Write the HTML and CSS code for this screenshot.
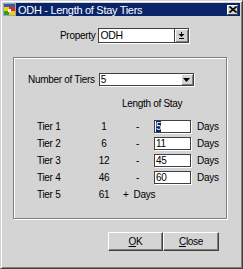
FILE: index.html
```html
<!DOCTYPE html>
<html lang="en">
<head>
    <meta charset="UTF-8">
    <title>ODH - Length of Stay Tiers</title>
    <link rel="stylesheet" href="styles.css">
</head>
<body>
    <div class="window">
        <div class="titlebar">
            <svg class="app-icon" width="13" height="13" viewBox="0 0 13 13">
                <rect x="0" y="0" width="13" height="13" fill="#9aa6b8"/>
                <rect x="1" y="1" width="11" height="3" fill="#3a5aa8"/>
                <rect x="1" y="4" width="5" height="4" fill="#f4d000"/>
                <rect x="6" y="4" width="6" height="4" fill="#d8282c"/>
                <rect x="1" y="8" width="5" height="4" fill="#2c9a3c"/>
                <rect x="6" y="8" width="6" height="4" fill="#f4d000"/>
                <rect x="5" y="6" width="3" height="3" fill="#ffffff"/>
            </svg>
            <span class="title">ODH - Length of Stay Tiers</span>
            <span class="close-btn">
                <svg width="8" height="7" viewBox="0 0 8 7">
                    <path d="M0.5 0.5 L7.5 6.5 M7.5 0.5 L0.5 6.5" stroke="#000" stroke-width="1.6"/>
                </svg>
            </span>
        </div>

        <div class="content">
            <div class="property-row">
                <label class="lbl">Property</label>
                <div class="field">
                    <span class="field-text">ODH</span>
                    <span class="field-btn">
                        <svg width="7" height="7" viewBox="0 0 7 7">
                            <rect x="3" y="0" width="1" height="2" fill="#000"/>
                            <polygon points="0.5,2 6.5,2 3.5,5" fill="#000"/>
                            <rect x="1" y="6" width="5" height="1" fill="#000"/>
                        </svg>
                    </span>
                </div>
            </div>

            <div class="group">
                <div class="tiers-row">
                    <label class="lbl">Number of Tiers</label>
                    <div class="combo">
                        <span class="combo-text">5</span>
                        <span class="combo-btn">
                            <svg width="7" height="4" viewBox="0 0 7 4">
                                <polygon points="0,0 7,0 3.5,4" fill="#000"/>
                            </svg>
                        </span>
                    </div>
                </div>

                <div class="los-head">Length of Stay</div>

                <div class="tier-grid">
                    <span>Tier 1</span><span class="num">1</span><span class="dash">-</span>
                    <span class="box"><span class="sel">5</span></span><span class="days">Days</span>

                    <span>Tier 2</span><span class="num">6</span><span class="dash">-</span>
                    <span class="box">11</span><span class="days">Days</span>

                    <span>Tier 3</span><span class="num">12</span><span class="dash">-</span>
                    <span class="box">45</span><span class="days">Days</span>

                    <span>Tier 4</span><span class="num">46</span><span class="dash">-</span>
                    <span class="box">60</span><span class="days">Days</span>

                    <span>Tier 5</span><span class="num">61</span><span class="plus">+&nbsp; Days</span>
                </div>
            </div>

            <div class="buttons">
                <button class="btn"><u>O</u>K</button>
                <button class="btn btn-wide"><u>C</u>lose</button>
            </div>
        </div>
    </div>
</body>
</html>
```

FILE: styles.css
```css
body {
    margin: 0;
    font-family: 'Liberation Sans', Arial, sans-serif;
    font-size: 10px;
    letter-spacing: -0.3px;
    color: #000;
    background: #d4d4d4;
}
.window {
    width: 243px;
    height: 269px;
    box-sizing: border-box;
    border: 1px solid;
    border-color: #d4d4d4 #404040 #404040 #d4d4d4;
    box-shadow: inset 1px 1px 0 #fff, inset -1px -1px 0 #808080;
    padding: 2px;
    background: #d4d4d4;
}
.titlebar {
    height: 13px;
    background: #0a246a;
    display: flex;
    align-items: center;
    color: #fff;
}
.app-icon {
    flex: none;
}
.title {
    margin-left: 2px;
    font-size: 11px;
    letter-spacing: -0.3px;
    flex: 1;
}
.close-btn {
    width: 11px;
    height: 10px;
    box-sizing: border-box;
    margin-right: 2px;
    background: #d4d4d4;
    border: 1px solid;
    border-color: #fff #404040 #404040 #fff;
    display: flex;
    align-items: center;
    justify-content: center;
}
.content {
    display: flex;
    flex-direction: column;
}
.lbl {
    white-space: nowrap;
}
.property-row {
    display: flex;
    align-items: center;
    margin-top: 12px;
    padding-left: 57px;
    gap: 3px;
}
.field {
    display: flex;
    width: 91px;
    height: 15px;
    box-sizing: border-box;
    border: 1px solid #404040;
    box-shadow: 1px 1px 0 #fff;
    background: #fff;
}
.field-text {
    flex: 1;
    padding-left: 1px;
    line-height: 13px;
    font-size: 10.5px;
}
.field-btn {
    width: 14px;
    box-sizing: border-box;
    background: #d4d4d4;
    border-left: 1px solid #404040;
    box-shadow: inset 1px 1px 0 #fff, inset -1px -1px 0 #808080;
    display: flex;
    align-items: center;
    justify-content: center;
}
.group {
    margin-top: 14px;
    margin-left: 10px;
    width: 214px;
    height: 162px;
    box-sizing: border-box;
    border: 1px solid #808080;
    box-shadow: inset 1px 1px 0 #fff, 1px 1px 0 #fff;
    padding-top: 15px;
}
.tiers-row {
    display: flex;
    align-items: center;
    padding-left: 14px;
    gap: 4px;
}
.combo {
    display: flex;
    width: 95px;
    height: 13px;
    box-sizing: border-box;
    border: 1px solid #404040;
    box-shadow: 1px 1px 0 #fff;
    background: #fff;
}
.combo-text {
    flex: 1;
    padding-left: 1px;
    line-height: 11px;
}
.combo-btn {
    width: 12px;
    background: #d4d4d4;
    box-shadow: inset 1px 1px 0 #fff, inset -1px -1px 0 #808080;
    display: flex;
    align-items: center;
    justify-content: center;
}
.los-head {
    margin-top: 12px;
    padding-left: 108px;
    line-height: 12px;
}
.tier-grid {
    margin-top: 8px;
    padding-left: 23px;
    display: grid;
    grid-template-columns: 50px 34px 33px 37px auto;
    grid-auto-rows: 17px;
    align-items: center;
}
.num, .dash {
    text-align: center;
}
.box {
    height: 13px;
    box-sizing: border-box;
    border: 1px solid #404040;
    box-shadow: 1px 1px 0 #fff;
    background: #fff;
    padding-left: 1px;
    line-height: 11px;
}
.sel {
    background: #0a246a;
    color: #fff;
}
.days {
    padding-left: 6px;
}
.plus {
    grid-column: 3 / span 3;
    padding-left: 2px;
}
.buttons {
    display: flex;
    justify-content: flex-end;
    margin-top: 13px;
    padding-right: 21px;
}
.btn {
    width: 55px;
    height: 19px;
    box-sizing: border-box;
    padding: 0;
    font: inherit;
    letter-spacing: inherit;
    color: #000;
    background: #d4d4d4;
    border: 1px solid;
    border-color: #fff #404040 #404040 #fff;
    box-shadow: inset -1px -1px 0 #808080;
}
.btn-wide {
    width: 56px;
}
```
